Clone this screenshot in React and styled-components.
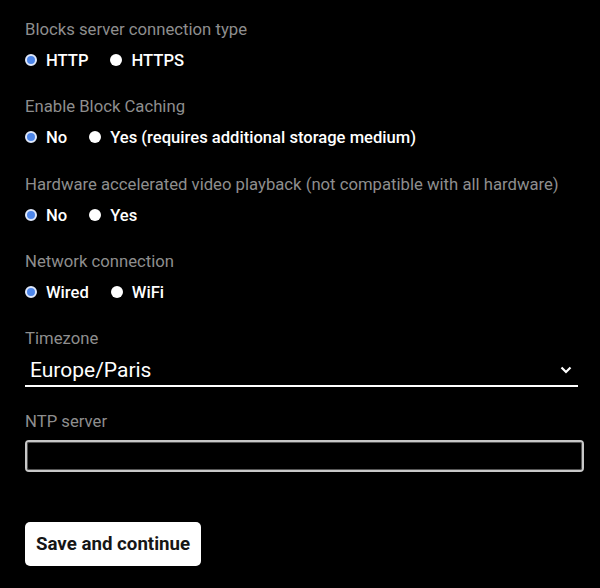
import React, { useState } from 'react';
import styled, { createGlobalStyle } from 'styled-components';

const GlobalStyle = createGlobalStyle`
  html, body {
    margin: 0;
    padding: 0;
    background: #000;
  }
  body {
    font-family: Roboto, "Liberation Sans", sans-serif;
  }
`;

const Page = styled.div`
  width: 600px;
  height: 588px;
  box-sizing: border-box;
  padding: 19px 22px 0 25px;
  background: #000;
  display: flex;
  flex-direction: column;
`;

const Field = styled.div`
  display: flex;
  flex-direction: column;
  margin-bottom: ${(p) => (p.$gap === undefined ? 26 : p.$gap)}px;
`;

const Label = styled.div`
  color: #8e8e8e;
  font-size: 16.7px;
  line-height: 22px;
  margin-bottom: ${(p) => p.$space || 9}px;
`;

const RadioRow = styled.div`
  display: flex;
  align-items: center;
  gap: 22px;
  height: 20px;
`;

const Option = styled.label`
  display: flex;
  align-items: center;
  gap: 9px;
  color: #fff;
  font-size: 16.6px;
  font-weight: 500;
  cursor: pointer;
`;

const Dot = styled.span`
  width: 12px;
  height: 12px;
  border-radius: 50%;
  box-sizing: border-box;
  background: ${(p) => (p.$on ? '#4d86ea' : '#fff')};
  border: ${(p) => (p.$on ? '2px solid #dfe8fb' : 'none')};
`;

const SelectBox = styled.div`
  display: flex;
  align-items: center;
  justify-content: space-between;
  height: 32px;
  padding: 0 6px 0 5px;
  border-bottom: 2px solid #fff;
  width: 553px;
  box-sizing: border-box;
  color: #fff;
  font-size: 21px;
`;

const Input = styled.input`
  width: 559px;
  height: 32px;
  box-sizing: border-box;
  background: #000;
  border: 2px solid #c8c8c8;
  border-radius: 4px;
  outline: 1px solid #555;
  outline-offset: -3px;
  color: #fff;
  font-size: 16px;
  padding: 0 8px;
`;

const Button = styled.button`
  align-self: flex-start;
  margin-top: 50px;
  background: #fff;
  color: #161616;
  border: none;
  border-radius: 5px;
  height: 44px;
  padding: 0 11px;
  font-family: Roboto, "Liberation Sans", sans-serif;
  font-size: 18.7px;
  font-weight: 700;
  cursor: pointer;
`;

const Radio = ({ options, value, onChange }) => (
  <RadioRow>
    {options.map((o) => (
      <Option key={o} onClick={() => onChange(o)}>
        <Dot $on={value === o} />
        {o}
      </Option>
    ))}
  </RadioRow>
);

const Chevron = () => (
  <svg width="12" height="8" viewBox="0 0 12 8">
    <path d="M1.5 1.5 L6 6 L10.5 1.5" stroke="#fff" strokeWidth="2.2" fill="none" />
  </svg>
);

export default function App() {
  const [proto, setProto] = useState('HTTP');
  const [cache, setCache] = useState('No');
  const [accel, setAccel] = useState('No');
  const [net, setNet] = useState('Wired');

  return (
    <>
      <GlobalStyle />
      <Page>
        <Field>
          <Label>Blocks server connection type</Label>
          <Radio options={['HTTP', 'HTTPS']} value={proto} onChange={setProto} />
        </Field>
        <Field $gap={27}>
          <Label>Enable Block Caching</Label>
          <Radio
            options={['No', 'Yes (requires additional storage medium)']}
            value={cache}
            onChange={setCache}
          />
        </Field>
        <Field>
          <Label>Hardware accelerated video playback (not compatible with all hardware)</Label>
          <Radio options={['No', 'Yes']} value={accel} onChange={setAccel} />
        </Field>
        <Field>
          <Label>Network connection</Label>
          <Radio options={['Wired', 'WiFi']} value={net} onChange={setNet} />
        </Field>
        <Field $gap={24}>
          <Label $space={5}>Timezone</Label>
          <SelectBox>
            <span>Europe/Paris</span>
            <Chevron />
          </SelectBox>
        </Field>
        <Field $gap={0}>
          <Label $space={7}>NTP server</Label>
          <Input type="text" />
        </Field>
        <Button>Save and continue</Button>
      </Page>
    </>
  );
}
